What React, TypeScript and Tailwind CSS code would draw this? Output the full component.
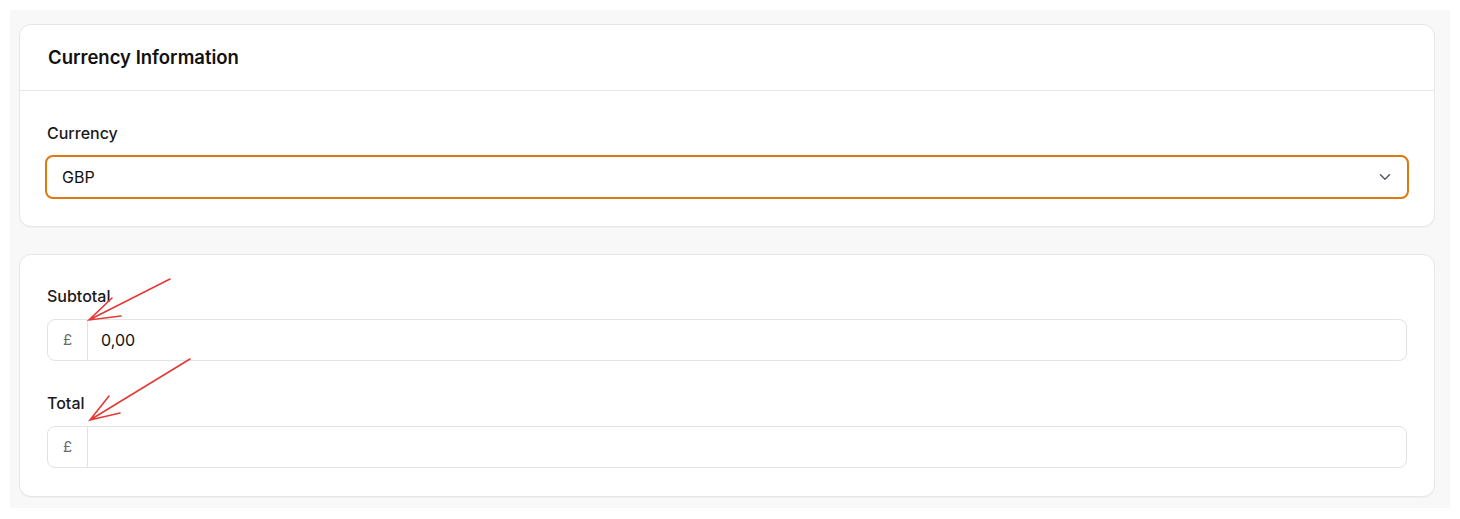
import React from 'react';
import { ChevronDown } from 'lucide-react';

const PrefixInput: React.FC<{ value?: string }> = ({ value }) => (
  <div className="flex h-[42px] rounded-lg border border-[#e3e3e3] bg-white overflow-hidden">
    <div className="w-[40px] flex items-center justify-center border-r border-[#e3e3e3] text-[#6b6b6b] text-[15px]">
      £
    </div>
    <div className="flex-1 flex items-center pl-[13px] text-[16px] text-[#111]">{value}</div>
  </div>
);

export default function App() {
  return (
    <div className="min-h-screen bg-white p-[10px]" style={{ fontFamily: 'Inter, "Noto Sans", sans-serif' }}>
      <div className="relative bg-[#f8f8f8] pl-[9px] pr-[15px] pt-[14px] pb-[11px] flex flex-col gap-[27px]">
        {/* Currency card */}
        <div className="bg-white rounded-xl border border-[#e6e6e6] shadow-[0_1px_1px_rgba(0,0,0,0.03)]">
          <div className="h-[66px] flex items-center px-[28px] border-b border-[#e6e6e6]">
            <h2 className="text-[18.5px] font-semibold text-[#111]">Currency Information</h2>
          </div>
          <div className="px-[27px] pt-[30px] pb-[27px]">
            <label className="block text-[16px] font-medium text-[#1a1a1a] leading-6 mb-[10px]">Currency</label>
            <div className="-mx-[2px] h-[44px] flex items-center justify-between rounded-lg border-2 border-[#dc7a12] bg-white pl-[15px] pr-[13px]">
              <span className="text-[16px] text-[#111]">GBP</span>
              <ChevronDown className="w-[18px] h-[18px] text-[#555b66]" strokeWidth={2} />
            </div>
          </div>
        </div>

        {/* Totals card */}
        <div className="bg-white rounded-xl border border-[#e6e6e6] shadow-[0_1px_1px_rgba(0,0,0,0.03)] px-[27px] pt-[29px] pb-[28px] flex flex-col">
          <label className="block text-[16px] font-medium text-[#1a1a1a] leading-6 mb-[11px]">Subtotal</label>
          <PrefixInput value="0,00" />
          <label className="block text-[16px] font-medium text-[#1a1a1a] leading-6 mt-[30px] mb-[11px]">Total</label>
          <PrefixInput />
        </div>

        {/* annotation arrows */}
        <svg className="absolute left-[-10px] top-[-10px] pointer-events-none" width="300" height="480" fill="none" stroke="#e53935" strokeWidth="1.6" strokeLinecap="round">
          <path d="M170 279 L89 320 M112 298 L89 320 L121 316" />
          <path d="M190 359 L90 420 M109 396 L90 420 L120 413" />
        </svg>
      </div>
    </div>
  );
}
